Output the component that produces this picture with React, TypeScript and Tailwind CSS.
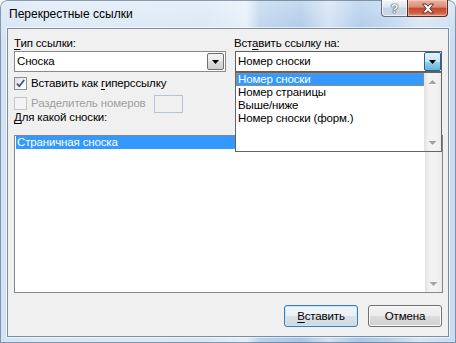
import React from "react";

function ComboArrow() {
  return (
    <svg width="7" height="4" viewBox="0 0 7 4">
      <path d="M0 0H7L3.5 4Z" fill="#000" />
    </svg>
  );
}

function ScrollArrow({ up }: { up?: boolean }) {
  return (
    <svg width="9" height="6" viewBox="0 0 9 6">
      {up ? (
        <>
          <path d="M0.5 5.5H8.5L4.5 1.5Z" fill="#fff" opacity="0.8" transform="translate(0 0.6)" />
          <path d="M0.5 5H8.5L4.5 1Z" fill="#a2a2a2" />
        </>
      ) : (
        <>
          <path d="M0.5 1.6H8.5L4.5 5.6Z" fill="#fff" opacity="0.8" />
          <path d="M0.5 1H8.5L4.5 5Z" fill="#a2a2a2" />
        </>
      )}
    </svg>
  );
}

function Scrollbar() {
  return (
    <div className="w-[17px] h-full flex flex-col justify-between bg-[linear-gradient(90deg,#e2e2e2_0%,#f1f1f1_25%,#f3f3f3_60%,#ececec_100%)]">
      <div className="h-[17px] flex items-center justify-center">
        <ScrollArrow up />
      </div>
      <div className="h-[17px] flex items-center justify-center">
        <ScrollArrow />
      </div>
    </div>
  );
}

export default function App() {
  return (
    <div className="relative w-[456px] h-[343px] overflow-hidden rounded-t-[7px] text-[11.5px] tracking-[-0.15px] text-black [font-family:'Liberation_Sans',Arial,sans-serif] bg-[linear-gradient(180deg,rgba(255,255,255,0.35)_0%,rgba(255,255,255,0)_12%),linear-gradient(90deg,#d3e3f3_0%,#dbe8f5_10%,#d8e6f4_45%,#e4eef8_54%,#b9d2ec_57%,#a8c6e7_66%,#cfe0f2_72%,#a9c7e8_79%,#bcd3ec_86%,#d6e5f4_92%,#c9dcf0_100%)] [box-shadow:inset_0_0_0_1px_rgba(60,85,115,0.55)]">
      {/* Title bar */}
      <div className="h-[28px] flex items-start">
        <div className="pl-[9px] pt-[7px] leading-[15px] text-[12px] tracking-normal text-black">Перекрестные ссылки</div>
        <div className="ml-auto mr-[8px] flex">
          <div className="w-[26px] h-[17px] flex items-center justify-center rounded-bl-[4px] border border-t-0 border-r-0 border-[#5f6f82] bg-[linear-gradient(180deg,#f1f5f9_0%,#dde6ef_45%,#c7d5e3_50%,#cbd8e6_100%)] [box-shadow:inset_0_0_0_1px_rgba(255,255,255,0.6)]">
            <span className="text-white font-bold text-[13px] leading-none [text-shadow:0_0_1px_#2d3a48,0_0_1px_#2d3a48,0_0_1px_#2d3a48]">?</span>
          </div>
          <div className="w-[41px] h-[17px] flex items-center justify-center rounded-br-[4px] border border-t-0 border-[#5b2a22] bg-[linear-gradient(180deg,#eab3a5_0%,#dc8a75_45%,#c5472f_50%,#cf5e43_80%,#e09880_100%)] [box-shadow:inset_0_0_0_1px_rgba(255,230,220,0.45)]">
            <svg width="14" height="11" viewBox="0 0 14 11">
              <path
                d="M1.5 1H5L7 3.3L9 1H12.5L8.8 5.5L12.5 10H9L7 7.7L5 10H1.5L5.2 5.5Z"
                fill="#fff"
                stroke="#4a2018"
                strokeWidth="0.9"
                strokeLinejoin="round"
              />
            </svg>
          </div>
        </div>
      </div>

      {/* Client area */}
      <div className="mx-[7px] h-[309px] border border-[#7c8ea2] bg-[#f0f0f0] flex flex-col pl-[6px] pr-[5px] pt-[7px] [box-shadow:0_0_0_1px_rgba(255,255,255,0.55)]">
        <div className="grid grid-cols-[212px_207px] gap-x-[9px]">
          {/* Left column */}
          <div className="flex flex-col">
            <div className="leading-[15px]">
              <span className="underline underline-offset-2">Т</span>ип ссылки:
            </div>
            <div className="h-[21px] border border-[#8a8a8a] bg-white flex items-stretch">
              <div className="flex-1 pl-[2px] flex items-center leading-[15px]">Сноска</div>
              <div className="w-[17px] my-[1px] mr-[1px] border border-[#707070] rounded-[2px] flex items-center justify-center bg-[linear-gradient(180deg,#f2f2f2_0%,#ebebeb_50%,#dddddd_50%,#cfcfcf_100%)]">
                <ComboArrow />
              </div>
            </div>
            <div className="mt-[4px] h-[15px] flex items-center gap-[4px]">
              <div className="w-[13px] h-[13px] border border-[#8e8f8f] bg-[linear-gradient(135deg,#dedede_0%,#f7f7f7_70%,#ffffff_100%)] flex items-center justify-center">
                <svg width="11" height="11" viewBox="0 0 11 11">
                  <path d="M2 5.6L4.3 8.2L9.2 2" fill="none" stroke="#3a4f82" strokeWidth="1.7" />
                </svg>
              </div>
              <div className="leading-[15px]">
                Вставить как <span className="underline underline-offset-2">г</span>иперссылку
              </div>
            </div>
            <div className="mt-[6px] h-[13px] flex items-center">
              <div className="w-[13px] h-[13px] shrink-0 border border-[#c6c6c6] bg-[#f4f4f4]" />
              <div className="ml-[4px] w-[123px] shrink-0 leading-[15px] text-[#a0a0a0]">Разделитель номеров</div>
              <div className="w-[29px] h-[18px] shrink-0 border border-[#b4c4d6] bg-[#f0f0f0]" />
            </div>
          </div>

          {/* Right column */}
          <div className="relative flex flex-col">
            <div className="leading-[15px] -ml-[1px]">
              Вст<span className="underline underline-offset-2">а</span>вить ссылку на:
            </div>
            <div className="relative">
              <div className="h-[21px] border border-[#5f5f5f] bg-white flex items-stretch">
                <div className="flex-1 pl-[2px] flex items-center leading-[15px]">Номер сноски</div>
                <div className="w-[17px] border border-[#2c628b] rounded-[2px] flex items-center justify-center bg-[linear-gradient(180deg,#e5f4fc_0%,#c4e5f6_50%,#98d1ef_50%,#68b3db_100%)]">
                  <ComboArrow />
                </div>
              </div>
              {/* Open drop-down list */}
              <div className="absolute left-0 top-full w-full h-[80px] border border-[#646464] bg-white flex z-10">
                <div className="flex-1 flex flex-col">
                  <div className="h-[13px] pl-[1px] border border-dotted border-[#d9822b] bg-[#3399ff] text-white leading-[11px] flex items-center">
                    Номер сноски
                  </div>
                  <div className="h-[13px] pl-[2px] leading-[13px]">Номер страницы</div>
                  <div className="h-[13px] pl-[2px] leading-[13px]">Выше/ниже</div>
                  <div className="h-[13px] pl-[2px] leading-[13px]">Номер сноски (форм.)</div>
                </div>
                <Scrollbar />
              </div>
            </div>
          </div>
        </div>

        <div className="leading-[15px]">
          <span className="underline underline-offset-2">Д</span>ля какой сноски:
        </div>

        {/* List box */}
        <div className="mt-[10px] h-[158px] border border-[#828790] bg-white flex">
          <div className="flex-1 pl-[1px]">
            <div className="h-[13px] bg-[#3399ff] text-white pl-[1px] leading-[13px]">Страничная сноска</div>
          </div>
          <Scrollbar />
        </div>

        {/* Buttons */}
        <div className="mt-[12px] flex justify-end gap-[10px] pr-[1px]">
          <div className="w-[74px] h-[22px] rounded-[3px] border border-[#3c7fb1] flex items-center justify-center leading-[15px] bg-[linear-gradient(180deg,#f3f6f9_0%,#eaf0f5_50%,#dbe3ea_50%,#cfd8e0_100%)] [box-shadow:inset_0_0_0_1px_#c6e6f8]">
            <span>
              <span className="underline underline-offset-2">В</span>ставить
            </span>
          </div>
          <div className="w-[74px] h-[22px] rounded-[3px] border border-[#707070] flex items-center justify-center leading-[15px] bg-[linear-gradient(180deg,#f2f2f2_0%,#ebebeb_50%,#dddddd_50%,#cfcfcf_100%)] [box-shadow:inset_0_0_0_1px_#fbfbfb]">
            Отмена
          </div>
        </div>
      </div>
    </div>
  );
}
